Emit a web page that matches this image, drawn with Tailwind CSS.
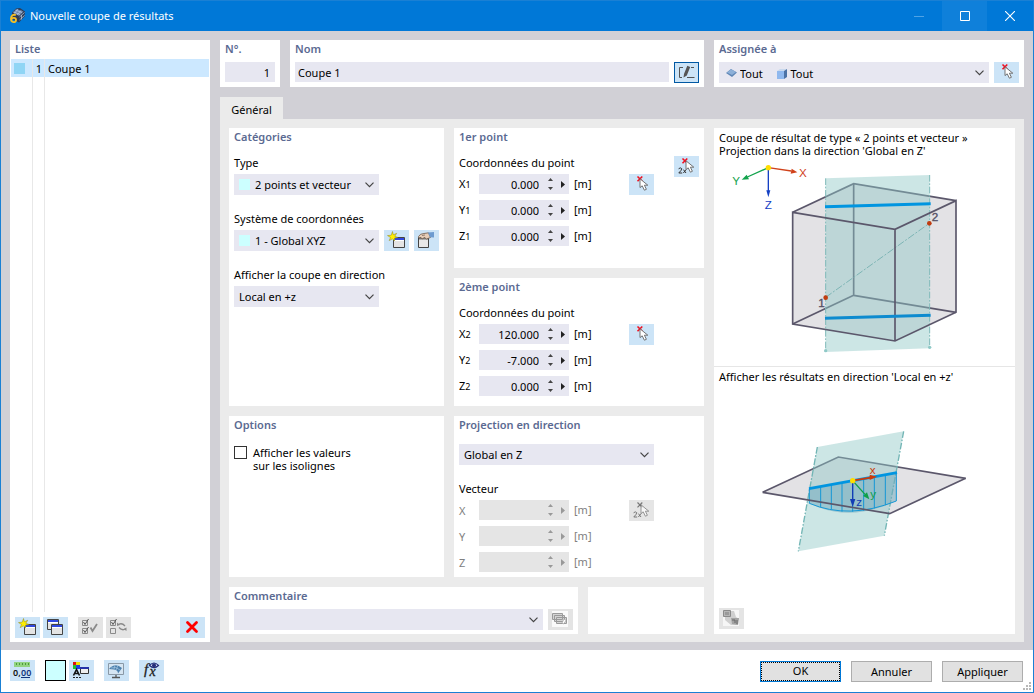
<!DOCTYPE html>
<html lang="fr">
<head>
<meta charset="utf-8">
<meta name="viewport" content="width=device-width, initial-scale=1">
<title>Nouvelle coupe de résultats</title>
<script src="https://cdn.jsdelivr.net/npm/@tailwindcss/browser@4"></script>
</head>
<body class="font-['Noto_Sans','Open_Sans',sans-serif] text-[11px] leading-[13px] text-black">

<!-- Shared icons; button icons use a 25x21 canvas -->
<svg class="hidden" aria-hidden="true">
  <symbol id="chev" viewBox="0 0 9 6"><path d="M.5 .7 4.5 4.7 8.5 .7" fill="none" stroke="#444" stroke-width="1.2"/></symbol>
  <symbol id="up" viewBox="0 0 5 3"><path d="M0 3 2.5 0 5 3z" fill="currentColor"/></symbol>
  <symbol id="down" viewBox="0 0 5 3"><path d="M0 0 2.5 3 5 0z" fill="currentColor"/></symbol>
  <symbol id="right" viewBox="0 0 4 7"><path d="M0 0 4 3.5 0 7z" fill="currentColor"/></symbol>
  <symbol id="win" viewBox="0 0 12 11"><path d="M.5 .5h11v10H.5z" fill="#e4e4e4" stroke="#444"/><path d="M1 1h10v2H1z" fill="#3048e0"/><path d="M1 3h10v1H1z" fill="#fff"/></symbol>
  <symbol id="newwin" viewBox="0 0 25 21">
    <use href="#win" x="9" y="7" width="12" height="11"/>
    <path d="M8.500 1.500 9.300 4.800 12.700 3.300 10.800 6.300 14 7.500 10.600 8 10.500 11 8.500 8.800 5.200 10.600 6.500 7.500 3.500 5.600 7.200 5.200z" fill="#ffee00" stroke="#8a8420" stroke-width=".5"/>
  </symbol>
  <symbol id="cursor" viewBox="0 0 10 13"><path d="M1 .8V9.6L3.2 7.800 5.400 12.200 7.400 11.300 5.400 7.200H8.800z" fill="#fff" stroke="#666" stroke-width=".9"/></symbol>
  <symbol id="pick" viewBox="0 0 25 21">
    <path d="M8.500 2.500 13.300 7.300M13.300 2.500 8.500 7.300" stroke="#f01020" stroke-width="1.600"/>
    <use href="#cursor" x="10" y="4" width="10" height="13"/>
  </symbol>
  <symbol id="pick2" viewBox="0 0 25 21">
    <path d="M8.500 2.500 13.300 7.300M13.300 2.500 8.500 7.300" stroke="#f01020" stroke-width="1.600"/>
    <path d="M4.600 12.800Q6.500 11 7.700 12.600 8 13.800 4.800 17H8.200M9.400 13.600 12 17M12 13.600 9.400 17" fill="none" stroke="#333" stroke-width="1"/>
    <use href="#cursor" x="11" y="4" width="10" height="13"/>
  </symbol>
  <symbol id="pick2off" viewBox="0 0 25 21">
    <path d="M8.500 2.500 13.300 7.300M13.300 2.500 8.500 7.300" stroke="#777" stroke-width="1.200"/>
    <path d="M4.600 12.800Q6.500 11 7.700 12.600 8 13.800 4.800 17H8.200M9.400 13.600 12 17M12 13.600 9.400 17" fill="none" stroke="#777" stroke-width="1"/>
    <use href="#cursor" x="11" y="4" width="10" height="13" opacity=".7"/>
  </symbol>
</svg>

<div class="flex min-h-screen flex-col border border-[#1a80d4] bg-[#d1d0d6]">

  <header class="flex h-[30px] items-stretch bg-[#0078d7] text-white">
    <div class="flex flex-1 items-center pl-2">
      <svg class="mr-1 h-4 w-[17px]" viewBox="0 0 17 16" aria-hidden="true">
        <path d="M3 4.500 7 .5 11 0 16 3.500 15.500 8.500 10 14.500 3 11z" fill="#2f3d57"/>
        <path d="M4 4.500 7.500 1 14.500 3.500 10 8z" fill="#6f86ab"/>
        <path d="M4.500 4 11 6.500M6.500 2.200 13 4.500M9 1 5.500 5.500M12 2.500 8 7M10.500 9 15.500 4.500M10.500 12 15.500 7.500M12.500 7V11.500" stroke="#bccbe2" stroke-width=".7"/>
        <path d="M6.800 7.300C4.500 5.800 2 7.500 2 10.800 2 15 7 15 7 12 7 9.300 3 9.300 2.300 11.500" fill="none" stroke="#f5c026" stroke-width="1.900"/>
      </svg>
      <h1 class="text-[11px] leading-4">Nouvelle coupe de résultats</h1>
    </div>
    <button aria-label="Réduire" class="flex w-[46px] items-center justify-center"><svg class="h-[10px] w-[10px]" viewBox="0 0 10 10"><path d="M0 5.500h10" stroke="#4fa3e6"/></svg></button>
    <button aria-label="Agrandir" class="flex w-[45px] items-center justify-center bg-[#0f80da]"><svg class="h-[10px] w-[10px]" viewBox="0 0 10 10"><path d="M.5 .5h9v9h-9z" fill="none" stroke="#fff"/></svg></button>
    <button aria-label="Fermer" class="flex w-[46px] items-center justify-center"><svg class="h-[10px] w-[10px]" viewBox="0 0 10 10"><path d="M0 0 10 10M10 0 0 10" stroke="#fff" stroke-width="1.1"/></svg></button>
  </header>

  <main class="flex flex-1 gap-[10px] px-[9px] pt-[9px] pb-2">

    <aside class="flex w-[200px] flex-col bg-white">
      <h2 class="h-[19px] pl-[5px] leading-[18px] font-semibold text-[#5b6a92]">Liste</h2>
      <div class="relative mx-px flex-1">
        <ul role="listbox" aria-label="Liste">
          <li role="option" aria-selected="true" class="flex h-[18px] items-center bg-[#cce8ff]">
            <span class="ml-[3px] h-[11px] w-[11px] bg-[#8fd5f5]"></span>
            <span class="w-[17px] text-right">1</span>
            <span class="pl-[6px]">Coupe 1</span>
          </li>
        </ul>
        <div class="pointer-events-none absolute inset-y-0 left-[21px] w-[13px] border-x border-[#e8e8e8]"></div>
      </div>
      <div class="flex gap-[3px] px-[5px] pt-[5px] pb-1">
        <button aria-label="Nouveau" class="h-[21px] w-[25px] bg-[#cce4f7]"><svg class="h-full w-full"><use href="#newwin"/></svg></button>
        <button aria-label="Copier" class="h-[21px] w-[25px] bg-[#cce4f7]"><svg class="h-full w-full" viewBox="0 0 25 21"><use href="#win" x="4" y="2" width="12" height="11"/><use href="#win" x="8" y="7" width="12" height="11"/></svg></button>
        <button aria-label="Tout sélectionner" disabled class="ml-[7px] h-[21px] w-[25px] bg-[#e4e4e4]"><svg class="h-full w-full" viewBox="0 0 25 21" fill="none" stroke="#8a8a8a"><path d="M4.500 3.500h5v5h-5zM4.500 11.500h5v5h-5z"/><path d="M5.500 5 7 7.500 10.500 2M5.500 13 7 15.500 10.500 10" stroke="#555"/><path d="M12.500 10.500 14.500 14 19 7" stroke-width="1.800"/></svg></button>
        <button aria-label="Inverser la sélection" disabled class="h-[21px] w-[25px] bg-[#e4e4e4]"><svg class="h-full w-full" viewBox="0 0 25 21" fill="none" stroke="#8a8a8a"><path d="M4.500 3.500h5v5h-5zM4.500 11.500h5v5h-5z"/><path d="M5.500 5 7 7.500 10.500 2" stroke="#555"/><path d="M12.500 7.500Q16 5.500 19 9M19.500 12Q16 14 13 10.500" stroke-width="1.300"/><path d="M11 9V5.500L14 8zM20.500 10.500V14L17.500 12z" fill="#8a8a8a" stroke="none"/></svg></button>
        <button aria-label="Supprimer" class="ml-auto h-[21px] w-[25px] bg-[#cce4f7]"><svg class="h-full w-full" viewBox="0 0 25 21"><path d="M7.500 5.500 16.500 14.500M16.500 5.500 7.500 14.500" stroke="#f00" stroke-width="2.800" stroke-linecap="round"/></svg></button>
      </div>
    </aside>

    <div class="flex min-w-0 flex-1 flex-col">
      <div class="mb-[10px] flex gap-[10px]">
        <div class="w-[60px] bg-white px-[5px] pb-[4px]">
          <label for="no" class="block h-[22px] leading-[18px] font-semibold text-[#5b6a92]">N°.</label>
          <input id="no" value="1" class="block h-5 w-full bg-[#e7e7f1] pr-[5px] text-right outline-none">
        </div>
        <div class="min-w-0 flex-1 bg-white px-[5px] pb-[4px]">
          <label for="nom" class="block h-[22px] leading-[18px] font-semibold text-[#5b6a92]">Nom</label>
          <div class="flex gap-[5px]">
            <input id="nom" value="Coupe 1" class="block h-5 min-w-0 flex-1 bg-[#e7e7f1] pl-[3px] outline-none">
            <button aria-label="Modifier le nom" class="h-[21px] w-[25px] border border-[#0058a3] bg-[#cce4f7]"><svg class="h-full w-full" viewBox="1 1 23 19"><path d="M9 5.500H5.500V15.500H8M13 15.500H20.500M17 5.500H20" fill="none" stroke="#555" stroke-width="1"/><path d="M9.500 15.500 10 12 13.300 3.800 16.200 5 12.800 13.400z" fill="#555"/></svg></button>
          </div>
        </div>
        <div class="w-[310px] bg-white px-[5px] pb-[4px]">
          <label for="assign" class="block h-[22px] leading-[18px] font-semibold text-[#5b6a92]">Assignée à</label>
          <div class="flex gap-[5px]">
            <div class="relative flex-1">
              <select id="assign" class="block h-[21px] w-full appearance-none bg-[#e7e7f1] pt-0.5 pl-[21px] outline-none"><option>Tout&emsp;&emsp;&nbsp;&nbsp;Tout</option></select>
              <svg class="pointer-events-none absolute top-[6px] left-[7px] h-[10px] w-[11px]" viewBox="0 0 11 10"><path d="M0 5 5 1 11 4.500 6 9z" fill="#5f86b5"/><path d="M1 4.500 5 1.200 10 4 6 7z" fill="#8db0d8"/></svg>
              <svg class="pointer-events-none absolute top-[7px] left-[58px] h-[10px] w-[10px]" viewBox="0 0 10 10"><path d="M0 2 3 0H10L7 2z" fill="#c9d9ee"/><path d="M0 2H7V10H0z" fill="#8fb8ee"/><path d="M7 2 10 0V8L7 10z" fill="#4c72a5"/></svg>
              <svg class="pointer-events-none absolute top-[8px] right-[5px] h-[6px] w-[9px]"><use href="#chev"/></svg>
            </div>
            <button aria-label="Sélectionner" class="h-[21px] w-[25px] bg-[#cce4f7]"><svg class="h-full w-full"><use href="#pick"/></svg></button>
          </div>
        </div>
      </div>

      <div role="tablist" class="flex">
        <button role="tab" aria-selected="true" class="h-[22px] w-[63px] bg-[#ebebeb] pt-0.5">Général</button>
      </div>

      <div role="tabpanel" class="grid flex-1 grid-cols-[minmax(0,1fr)_301px] gap-[10px] bg-[#ebebeb] px-[9px] pt-[9px] pb-2">
        <div class="flex flex-col gap-[10px]">
          <div class="grid flex-1 grid-cols-[215px_minmax(0,1fr)] gap-[10px]">

            <div class="flex flex-col gap-[10px]">
              <section class="flex-1 bg-white px-[5px]">
                <h2 class="mb-2 h-[18px] leading-[18px] font-semibold text-[#5b6a92]">Catégories</h2>
                <label for="type" class="block h-5 leading-[18px]">Type</label>
                <div class="relative mb-[15px] w-[145px]">
                  <select id="type" class="block h-[21px] w-full appearance-none bg-[#e7e7f1] pl-[21px] outline-none"><option>2 points et vecteur</option></select>
                  <span class="pointer-events-none absolute top-[5px] left-[5px] h-[11px] w-[11px] bg-[#ccffff]"></span>
                  <svg class="pointer-events-none absolute top-[8px] right-[5px] h-[6px] w-[9px]"><use href="#chev"/></svg>
                </div>
                <label for="sys" class="block h-5 leading-[18px]">Système de coordonnées</label>
                <div class="mb-[15px] flex gap-[5px]">
                  <div class="relative w-[145px]">
                    <select id="sys" class="block h-[21px] w-full appearance-none bg-[#e7e7f1] pl-[21px] outline-none"><option>1 - Global XYZ</option></select>
                    <span class="pointer-events-none absolute top-[5px] left-[5px] h-[11px] w-[11px] bg-[#ccffff]"></span>
                    <svg class="pointer-events-none absolute top-[8px] right-[5px] h-[6px] w-[9px]"><use href="#chev"/></svg>
                  </div>
                  <button aria-label="Nouveau système" class="h-[21px] w-[25px] bg-[#cce4f7]"><svg class="h-full w-full"><use href="#newwin"/></svg></button>
                  <button aria-label="Modifier le système" class="ml-auto h-[21px] w-[25px] bg-[#cce4f7]"><svg class="h-full w-full" viewBox="0 0 25 21"><path d="M4.500 7.500h10v10h-10z" fill="#e8e8e8" stroke="#444"/><path d="M5 8h9v1.500H5z" fill="#777"/><path d="M4.500 6.500Q6 3.500 10 3.500L14.500 2.800 16.500 7.500 12.500 9 10.500 7.500 8 9 7 7.500 5 8z" fill="#e6cdb8" stroke="#6d5a4d" stroke-width=".8"/><path d="M8 5.500 11 5" stroke="#6d5a4d" stroke-width=".7"/><path d="M14 2.500 20 2V7.500L16 7.200z" fill="#6d9bd0"/></svg></button>
                </div>
                <label for="dir" class="block h-5 leading-[18px]">Afficher la coupe en direction</label>
                <div class="relative w-[145px]">
                  <select id="dir" class="block h-[21px] w-full appearance-none bg-[#e7e7f1] pl-[5px] outline-none"><option>Local en +z</option></select>
                  <svg class="pointer-events-none absolute top-[8px] right-[5px] h-[6px] w-[9px]"><use href="#chev"/></svg>
                </div>
              </section>
              <section class="min-h-[161px] bg-white px-[5px]">
                <h2 class="mb-3 h-[18px] leading-[18px] font-semibold text-[#5b6a92]">Options</h2>
                <div class="flex gap-[6px]">
                  <input type="checkbox" id="iso" class="h-[13px] w-[13px] shrink-0 appearance-none border border-[#333] bg-white checked:bg-[#333]">
                  <label for="iso">Afficher les valeurs<br>sur les isolignes</label>
                </div>
              </section>
            </div>

            <div class="flex flex-col gap-[10px]">
              <section class="flex-1 bg-white px-[5px]">
                <h2 class="h-[18px] leading-[18px] font-semibold text-[#5b6a92]">1er point</h2>
                <div class="flex pt-2">
                  <fieldset class="w-[170px]">
                    <legend class="block h-5 leading-[18px]">Coordonnées du point</legend>
                    <div class="flex flex-col gap-[6px]">
                      <div class="flex h-5 items-center"><label for="x1" class="w-5">X<span class="text-[9px]">1</span></label>
                        <div class="flex h-5 w-[90px] items-center bg-[#e7e7f1] text-[#444]"><input id="x1" value="0.000" class="h-5 w-[60px] text-right text-black outline-none"><span class="ml-[9px] flex flex-col gap-[6px]"><button aria-label="Augmenter" class="block h-[3px] w-[5px]"><svg class="block h-[3px] w-[5px]"><use href="#up"/></svg></button><button aria-label="Diminuer" class="block h-[3px] w-[5px]"><svg class="block h-[3px] w-[5px]"><use href="#down"/></svg></button></span><button aria-label="Options" class="ml-2 text-[#222]"><svg class="block h-[7px] w-[4px]"><use href="#right"/></svg></button></div>
                        <span class="ml-[5px] h-[15px]">[m]</span></div>
                      <div class="flex h-5 items-center"><label for="y1" class="w-5">Y<span class="text-[9px]">1</span></label>
                        <div class="flex h-5 w-[90px] items-center bg-[#e7e7f1] text-[#444]"><input id="y1" value="0.000" class="h-5 w-[60px] text-right text-black outline-none"><span class="ml-[9px] flex flex-col gap-[6px]"><button aria-label="Augmenter" class="block h-[3px] w-[5px]"><svg class="block h-[3px] w-[5px]"><use href="#up"/></svg></button><button aria-label="Diminuer" class="block h-[3px] w-[5px]"><svg class="block h-[3px] w-[5px]"><use href="#down"/></svg></button></span><button aria-label="Options" class="ml-2 text-[#222]"><svg class="block h-[7px] w-[4px]"><use href="#right"/></svg></button></div>
                        <span class="ml-[5px] h-[15px]">[m]</span></div>
                      <div class="flex h-5 items-center"><label for="z1" class="w-5">Z<span class="text-[9px]">1</span></label>
                        <div class="flex h-5 w-[90px] items-center bg-[#e7e7f1] text-[#444]"><input id="z1" value="0.000" class="h-5 w-[60px] text-right text-black outline-none"><span class="ml-[9px] flex flex-col gap-[6px]"><button aria-label="Augmenter" class="block h-[3px] w-[5px]"><svg class="block h-[3px] w-[5px]"><use href="#up"/></svg></button><button aria-label="Diminuer" class="block h-[3px] w-[5px]"><svg class="block h-[3px] w-[5px]"><use href="#down"/></svg></button></span><button aria-label="Options" class="ml-2 text-[#222]"><svg class="block h-[7px] w-[4px]"><use href="#right"/></svg></button></div>
                        <span class="ml-[5px] h-[15px]">[m]</span></div>
                    </div>
                  </fieldset>
                  <button aria-label="Choisir le point" class="mt-5 h-[21px] w-[25px] bg-[#cce4f7]"><svg class="h-full w-full"><use href="#pick"/></svg></button>
                  <button aria-label="Choisir deux points" class="mt-0.5 ml-auto h-[21px] w-[25px] bg-[#cce4f7]"><svg class="h-full w-full"><use href="#pick2"/></svg></button>
                </div>
              </section>

              <section class="min-h-[128px] bg-white px-[5px]">
                <h2 class="h-[18px] leading-[18px] font-semibold text-[#5b6a92]">2ème point</h2>
                <div class="flex pt-2">
                  <fieldset class="w-[170px]">
                    <legend class="block h-5 leading-[18px]">Coordonnées du point</legend>
                    <div class="flex flex-col gap-[6px]">
                      <div class="flex h-5 items-center"><label for="x2" class="w-5">X<span class="text-[9px]">2</span></label>
                        <div class="flex h-5 w-[90px] items-center bg-[#e7e7f1] text-[#444]"><input id="x2" value="120.000" class="h-5 w-[60px] text-right text-black outline-none"><span class="ml-[9px] flex flex-col gap-[6px]"><button aria-label="Augmenter" class="block h-[3px] w-[5px]"><svg class="block h-[3px] w-[5px]"><use href="#up"/></svg></button><button aria-label="Diminuer" class="block h-[3px] w-[5px]"><svg class="block h-[3px] w-[5px]"><use href="#down"/></svg></button></span><button aria-label="Options" class="ml-2 text-[#222]"><svg class="block h-[7px] w-[4px]"><use href="#right"/></svg></button></div>
                        <span class="ml-[5px] h-[15px]">[m]</span></div>
                      <div class="flex h-5 items-center"><label for="y2" class="w-5">Y<span class="text-[9px]">2</span></label>
                        <div class="flex h-5 w-[90px] items-center bg-[#e7e7f1] text-[#444]"><input id="y2" value="-7.000" class="h-5 w-[60px] text-right text-black outline-none"><span class="ml-[9px] flex flex-col gap-[6px]"><button aria-label="Augmenter" class="block h-[3px] w-[5px]"><svg class="block h-[3px] w-[5px]"><use href="#up"/></svg></button><button aria-label="Diminuer" class="block h-[3px] w-[5px]"><svg class="block h-[3px] w-[5px]"><use href="#down"/></svg></button></span><button aria-label="Options" class="ml-2 text-[#222]"><svg class="block h-[7px] w-[4px]"><use href="#right"/></svg></button></div>
                        <span class="ml-[5px] h-[15px]">[m]</span></div>
                      <div class="flex h-5 items-center"><label for="z2" class="w-5">Z<span class="text-[9px]">2</span></label>
                        <div class="flex h-5 w-[90px] items-center bg-[#e7e7f1] text-[#444]"><input id="z2" value="0.000" class="h-5 w-[60px] text-right text-black outline-none"><span class="ml-[9px] flex flex-col gap-[6px]"><button aria-label="Augmenter" class="block h-[3px] w-[5px]"><svg class="block h-[3px] w-[5px]"><use href="#up"/></svg></button><button aria-label="Diminuer" class="block h-[3px] w-[5px]"><svg class="block h-[3px] w-[5px]"><use href="#down"/></svg></button></span><button aria-label="Options" class="ml-2 text-[#222]"><svg class="block h-[7px] w-[4px]"><use href="#right"/></svg></button></div>
                        <span class="ml-[5px] h-[15px]">[m]</span></div>
                    </div>
                  </fieldset>
                  <button aria-label="Choisir le point" class="mt-5 h-[21px] w-[25px] bg-[#cce4f7]"><svg class="h-full w-full"><use href="#pick"/></svg></button>
                </div>
              </section>

              <section class="min-h-[161px] bg-white px-[5px]">
                <h2 class="mb-[10px] h-[18px] leading-[18px] font-semibold text-[#5b6a92]"><label for="proj">Projection en direction</label></h2>
                <div class="relative mb-[15px] w-[195px]">
                  <select id="proj" class="block h-[21px] w-full appearance-none bg-[#e7e7f1] pl-[5px] outline-none"><option>Global en Z</option></select>
                  <svg class="pointer-events-none absolute top-[8px] right-[5px] h-[6px] w-[9px]"><use href="#chev"/></svg>
                </div>
                <div class="flex">
                  <fieldset disabled class="w-[170px] text-[#808080]">
                    <legend class="block h-5 leading-[18px] text-black">Vecteur</legend>
                    <div class="flex flex-col gap-[6px]">
                      <div class="flex h-5 items-center"><label for="vx" class="w-5">X</label>
                        <div class="flex h-5 w-[90px] items-center bg-[#e5e5e5] text-[#999]"><input id="vx" class="h-5 w-[60px] text-right outline-none"><span class="ml-[9px] flex flex-col gap-[6px]"><button aria-label="Augmenter" class="block h-[3px] w-[5px]"><svg class="block h-[3px] w-[5px]"><use href="#up"/></svg></button><button aria-label="Diminuer" class="block h-[3px] w-[5px]"><svg class="block h-[3px] w-[5px]"><use href="#down"/></svg></button></span><button aria-label="Options" class="ml-2"><svg class="block h-[7px] w-[4px]"><use href="#right"/></svg></button></div>
                        <span class="ml-[5px] h-[15px]">[m]</span></div>
                      <div class="flex h-5 items-center"><label for="vy" class="w-5">Y</label>
                        <div class="flex h-5 w-[90px] items-center bg-[#e5e5e5] text-[#999]"><input id="vy" class="h-5 w-[60px] text-right outline-none"><span class="ml-[9px] flex flex-col gap-[6px]"><button aria-label="Augmenter" class="block h-[3px] w-[5px]"><svg class="block h-[3px] w-[5px]"><use href="#up"/></svg></button><button aria-label="Diminuer" class="block h-[3px] w-[5px]"><svg class="block h-[3px] w-[5px]"><use href="#down"/></svg></button></span><button aria-label="Options" class="ml-2"><svg class="block h-[7px] w-[4px]"><use href="#right"/></svg></button></div>
                        <span class="ml-[5px] h-[15px]">[m]</span></div>
                      <div class="flex h-5 items-center"><label for="vz" class="w-5">Z</label>
                        <div class="flex h-5 w-[90px] items-center bg-[#e5e5e5] text-[#999]"><input id="vz" class="h-5 w-[60px] text-right outline-none"><span class="ml-[9px] flex flex-col gap-[6px]"><button aria-label="Augmenter" class="block h-[3px] w-[5px]"><svg class="block h-[3px] w-[5px]"><use href="#up"/></svg></button><button aria-label="Diminuer" class="block h-[3px] w-[5px]"><svg class="block h-[3px] w-[5px]"><use href="#down"/></svg></button></span><button aria-label="Options" class="ml-2"><svg class="block h-[7px] w-[4px]"><use href="#right"/></svg></button></div>
                        <span class="ml-[5px] h-[15px]">[m]</span></div>
                    </div>
                  </fieldset>
                  <button aria-label="Choisir le vecteur" disabled class="mt-5 h-[21px] w-[25px] bg-[#e5e5e5]"><svg class="h-full w-full"><use href="#pick2off"/></svg></button>
                </div>
              </section>
            </div>
          </div>

          <div class="flex gap-[10px]">
            <section class="min-w-0 flex-1 bg-white px-[5px] pb-1">
              <label for="com" class="mb-1 block h-[18px] leading-[18px] font-semibold text-[#5b6a92]">Commentaire</label>
              <div class="flex gap-[5px]">
                <div class="relative flex-1">
                  <select id="com" class="block h-[21px] w-full appearance-none bg-[#e7e7f1] outline-none"><option></option></select>
                  <svg class="pointer-events-none absolute top-[8px] right-[5px] h-[6px] w-[9px]"><use href="#chev"/></svg>
                </div>
                <button aria-label="Commentaires enregistrés" disabled class="h-[21px] w-[25px] bg-[#e4e4e4]"><svg class="h-full w-full" viewBox="0 0 25 21"><path d="M4 2h16v16H4z" fill="#fafafa"/><path d="M4.500 4.500h10v6h-10zM6.500 6.500h10v6h-10zM8.500 8.500h10v6h-10z" fill="#d4d4d4" stroke="#9a9a9a"/><path d="M14 14 16 10 18 11.500 15.500 15z" fill="#fff" stroke="#999" stroke-width=".6"/></svg></button>
              </div>
            </section>
            <div class="w-[116px] bg-white"></div>
          </div>
        </div>

        <section class="flex flex-col bg-white">
          <p class="h-[30px] px-[5px] pt-[3px]">Coupe de résultat de type « 2 points et vecteur »<br>Projection dans la direction 'Global en Z'</p>
          <svg class="h-[202px] w-full" viewBox="0 99 903 606" role="img" aria-label="Plan de coupe vertical dans un cube">
            <path d="M236 262 419 176 726 227V562L543 648 236 597z" fill="#e3e2e5"/>
            <path d="M419 176V511L236 597M419 511 726 562" fill="none" stroke="#5b576b" stroke-width="5"/>
            <path d="M236 262 419 176 726 227" fill="none" stroke="#5b576b" stroke-width="5"/>
            <path d="M335 160 647 150V670L335 681z" fill="#8fc9c7" fill-opacity=".46"/>
            <path d="M335 160V681M647 150V670" stroke="#7fbab9" stroke-width="3" stroke-dasharray="20 5 5 5"/>
            <path d="M335 517 646 295" stroke="#7db5b5" stroke-width="3" stroke-dasharray="22 5 6 5"/>
            <path d="M236 262 543 313 726 227V562L543 648 236 597zM543 313V648" fill="none" stroke="#5b576b" stroke-width="5"/>
            <path d="M333 245 650 236" stroke="#0095e0" stroke-width="9"/>
            <path d="M333 580 650 571" stroke="#0d8bcf" stroke-width="9"/>
            <circle cx="335" cy="518" r="7" fill="#c03c10"/><circle cx="646" cy="295" r="7" fill="#c03c10"/>
            <circle cx="335" cy="677" r="5" fill="#8fc9c7"/><circle cx="647" cy="667" r="5" fill="#8fc9c7"/>
            <path d="M163 128 232 138" stroke="#d0421b" stroke-width="4"/><path d="M250 142 230 146 233 131z" fill="#d0421b"/>
            <path d="M163 128 100 156" stroke="#13a34d" stroke-width="4"/><path d="M83 164 98 149 105 163z" fill="#13a34d"/>
            <path d="M163 128V198" stroke="#1540c4" stroke-width="4"/><path d="M163 217 157 196H169z" fill="#1540c4"/>
            <circle cx="163" cy="128" r="8" fill="#ffde00"/>
            <g font-family="Liberation Sans, sans-serif" font-size="35">
              <text x="255" y="157" fill="#d0421b">X</text><text x="55" y="180" fill="#13a34d">Y</text><text x="152" y="251" fill="#1540c4">Z</text>
              <g fill="#555064" stroke="#555064"><text x="313" y="546">1</text><text x="653" y="288">2</text></g>
            </g>
          </svg>
          <p class="mt-[6px] h-[18px] border-t border-[#e6e6e6] px-[5px] pt-[3px]">Afficher les résultats en direction 'Local en +z'</p>
          <svg class="h-[191px] w-full" viewBox="0 57 903 573" role="img" aria-label="Résultats sur le plan de coupe">
            <path d="M146 382 373 276 755 340 527 446z" fill="#e3e2e5"/>
            <path d="M146 382 373 276 755 340" fill="none" stroke="#5b576b" stroke-width="5"/>
            <path d="M310 246 569 199 511 512 253 559z" fill="#8fc9c7" fill-opacity=".46"/>
            <path d="M310 246 253 559M569 199 511 512" stroke="#72b5b5" stroke-width="4" stroke-dasharray="20 5 5 5"/>
            <path d="M286 371 547 323V408Q405 475 286 415z" fill="#6ba8bd" fill-opacity=".5"/>
            <path d="M286 371V415Q405 465 547 408V323M320 366V426M352 360V433M384 354V440M416 347V440M449 342V437M481 336V430M514 330V420" fill="none" stroke="#1597d5" stroke-width="3"/>
            <path d="M755 340 527 446 146 382" fill="none" stroke="#5b576b" stroke-width="5"/>
            <path d="M285 371 549 323" stroke="#0095e0" stroke-width="8"/>
            <path d="M416 347 470 338" stroke="#cc3a0b" stroke-width="5"/><path d="M489 335 467 329V345z" fill="#cc3a0b"/>
            <path d="M416 347 453 388" stroke="#10a04a" stroke-width="4"/><path d="M466 403 447 393 459 382z" fill="#10a04a"/>
            <path d="M416 347V405" stroke="#123cb5" stroke-width="4"/><path d="M416 426 408 402H424z" fill="#123cb5"/>
            <circle cx="416" cy="347" r="8" fill="#ffde00"/>
            <g font-family="Liberation Sans, sans-serif" font-size="35">
              <text x="467" y="326" fill="#cc3a0b">x</text><text x="469" y="398" fill="#10a04a">y</text><text x="427" y="422" fill="#123cb5">z</text>
            </g>
          </svg>
          <div class="mt-auto px-[5px] pb-[5px]">
            <button aria-label="Copier l'image" disabled class="block h-[21px] w-[25px] bg-[#e4e4e4]"><svg class="h-full w-full" viewBox="0 0 25 21"><path d="M4 2h16v16H4z" fill="#f6f6f6"/><path d="M11 3 15 3 17 9 20 11 18 17 12 17 6 12 6 9z" fill="#cfcfcf"/><path d="M4.500 2.500h7v6h-7z" fill="#b5b5b5" stroke="#8a8a8a"/><path d="M6 4h4v3H6z" fill="#999"/><path d="M12 10h8l-1 7-6-1z" fill="#a3a3a3"/><path d="M13 12h3v3M18 12v4" fill="none" stroke="#666"/></svg></button>
          </div>
        </section>
      </div>
    </div>
  </main>

  <footer class="relative flex h-[42px] items-start bg-white pt-[10px] pr-[10px] pl-[9px]">
    <button aria-label="Unités" class="h-[21px] w-[25px] bg-[#cce4f7]"><svg class="h-full w-full" viewBox="0 0 25 21"><path d="M4 2h16v5H4z" fill="#93d480"/><path d="M6.500 3v2M9.500 3v2M12.500 3v2M15.500 3v2M18.500 3v2" stroke="#4c9a3c"/><g font-family="Noto Sans, sans-serif" font-size="9" font-weight="600"><text x="3" y="16" fill="#111">0,</text><text x="11" y="16" fill="#12347c">00</text></g><path d="M11 17.500h9" stroke="#12347c"/></svg></button>
    <button aria-label="Couleur" class="ml-[10px] h-[21px] w-[21px] border border-black bg-[#ccffff]"></button>
    <button aria-label="Affichage des couleurs" class="ml-[3px] h-[21px] w-[25px] bg-[#cce4f7]"><svg class="h-full w-full" viewBox="0 0 25 21"><path d="M4 2h3v3H4z" fill="#e01010"/><path d="M7 2h4v3H7z" fill="#f0e000"/><path d="M4 5h3v4H4z" fill="#20c030"/><path d="M7 5h4v4H7z" fill="#2040e0"/><path d="M4.500 15.500 7.500 9.500 10.500 15.500M5.500 13.500h4" fill="none" stroke="#111" stroke-width="1.600"/><path d="M4 17.500h9" stroke="#222" stroke-dasharray="2 1"/><path d="M11.500 7.500h8v6h-8z" fill="#eee" stroke="#333"/><path d="M11 7h9v2h-9z" fill="#2432a8"/></svg></button>
    <button aria-label="Vue" class="ml-[10px] h-[21px] w-[25px] bg-[#cce4f7]"><svg class="h-full w-full" viewBox="0 0 25 21"><path d="M4.500 3.500h15v11h-15z" fill="#d5e5f2" stroke="#8998a6"/><path d="M12 15v2M8 17.500h8" stroke="#555" stroke-width="1.300"/><path d="M5 9Q11 2 18 8L14 13.500Q14 10 10 9.500Z" fill="#4c80ad"/><path d="M7 8Q12 6 16 10M11 5 10 9M14 5.500 12 10" fill="none" stroke="#a7c8e2" stroke-width=".7"/></svg></button>
    <button aria-label="Formule" class="ml-[10px] h-[21px] w-[25px] bg-[#cce4f7]"><svg class="h-full w-full" viewBox="0 0 25 21"><g font-family="Liberation Serif, serif" font-style="italic" fill="#222" stroke="#222" stroke-width=".3"><text x="5" y="14" font-size="15">f</text><text x="10.500" y="15.500" font-size="14">x</text></g><path d="M10.500 5.500Q15 .5 19.500 5.500 15 9.500 10.500 5.500z" fill="#dde6ff" stroke="#26307a" stroke-width="1.200"/><circle cx="15" cy="5.300" r="2" fill="#26307a"/></svg></button>
    <div class="ml-auto flex gap-[10px] pt-px">
      <button class="h-[21px] w-[81px] border border-[#0078d7] bg-[#0078d7]"><span class="block h-[19px] border border-dotted border-black bg-[#e1e1e1] leading-4">OK</span></button>
      <button class="h-[21px] w-[81px] border border-[#adadad] bg-[#e1e1e1] pb-px">Annuler</button>
      <button class="h-[21px] w-[81px] border border-[#adadad] bg-[#e1e1e1] pb-px">Appliquer</button>
    </div>
    <svg class="absolute right-[2px] bottom-[2px] h-2 w-2" viewBox="0 0 8 8" fill="#b8b8b8"><path d="M6 0h2v2H6zM3 3h2v2H3zM6 3h2v2H6zM0 6h2v2H0zM3 6h2v2H3zM6 6h2v2H6z"/></svg>
  </footer>
</div>
</body>
</html>
